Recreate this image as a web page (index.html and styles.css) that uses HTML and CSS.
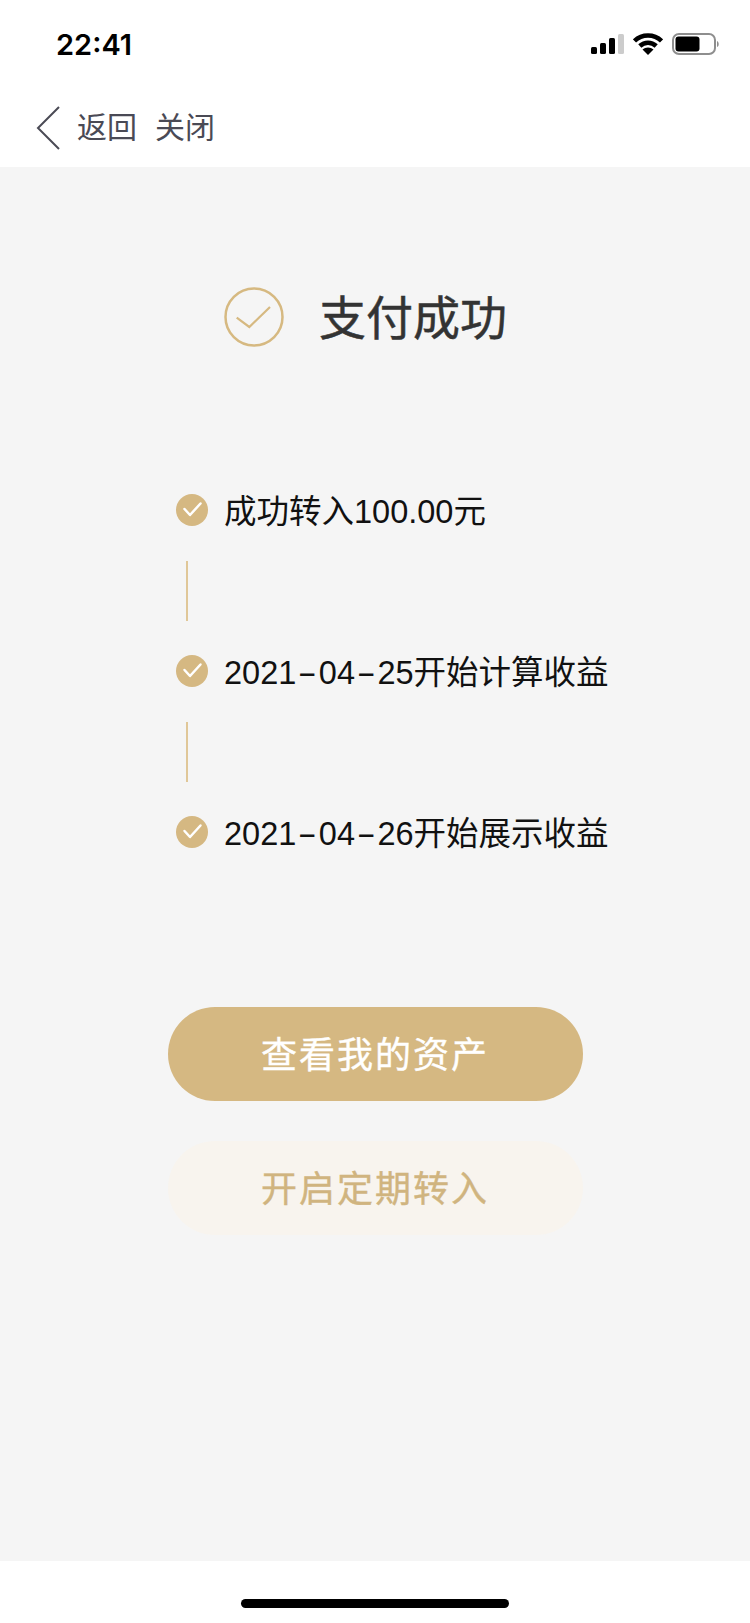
FILE: index.html
```html
<!DOCTYPE html>
<html lang="zh-CN">
<head>
<meta charset="utf-8">
<title>支付成功</title>
<link rel="stylesheet" href="styles.css">
</head>
<body>
<div class="page">
  <header class="status">
    <span class="time">22:41</span>
    <div class="status-icons">
      <svg class="signal" width="34" height="22" viewBox="0 0 34 22"><rect x="1" y="14" width="6" height="7" rx="1.5" fill="#000"/><rect x="10" y="10" width="6" height="11" rx="1.5" fill="#000"/><rect x="19" y="5" width="6" height="16" rx="1.5" fill="#000"/><rect x="28" y="1" width="6" height="20" rx="1.5" fill="#ccc"/></svg>
      <svg class="wifi" width="30" height="22" viewBox="0 0 30 22"><path d="M1.500 8C9 .8 21 .8 28.500 8" fill="none" stroke="#000" stroke-width="4.500"/><path d="M6.800 13C11.500 8.500 18.500 8.500 23.200 13" fill="none" stroke="#000" stroke-width="4.500"/><path d="M15 22l-5.500-5.500c3-2.800 8-2.800 11 0z" fill="#000"/></svg>
      <svg class="battery" width="48" height="24" viewBox="0 0 48 24"><rect x="1" y="2" width="42" height="20" rx="6" fill="none" stroke="#8e8e8e" stroke-width="2"/><rect x="3.500" y="4.500" width="24" height="15" rx="3" fill="#000"/><path d="M45 9c2 .5 2.500 5.500 0 6z" fill="#8e8e8e"/></svg>
    </div>
  </header>
  <nav class="nav">
    <svg class="back" width="26" height="46" viewBox="0 0 26 46"><path d="M23 2 2 23l21 21" fill="none" stroke="#4a4a55" stroke-width="2"/></svg>
    <span class="nav-link">返回</span>
    <span class="nav-link">关闭</span>
  </nav>
  <main class="main">
    <div class="result">
      <svg class="result-icon" width="60" height="60" viewBox="0 0 60 60"><circle cx="30" cy="30" r="28.500" fill="none" stroke="#d6b981" stroke-width="2.500"/><path d="M12.700 30.700 25.300 40 46 20" fill="none" stroke="#d6b981" stroke-width="2.200"/></svg>
      <h1 class="result-title">支付成功</h1>
    </div>
    <ol class="steps">
      <li class="step">
        <svg class="step-icon" width="32" height="32" viewBox="0 0 32 32"><circle cx="16" cy="16" r="16" fill="#d5b882"/><path d="M8.500 15l5.500 6L24.500 9.500" fill="none" stroke="#fff" stroke-width="2.500" stroke-linecap="round" stroke-linejoin="round"/></svg>
        <span class="step-text">成功转入100.00元</span>
      </li>
      <li class="step-line"></li>
      <li class="step">
        <svg class="step-icon" width="32" height="32" viewBox="0 0 32 32"><circle cx="16" cy="16" r="16" fill="#d5b882"/><path d="M8.500 15l5.500 6L24.500 9.500" fill="none" stroke="#fff" stroke-width="2.500" stroke-linecap="round" stroke-linejoin="round"/></svg>
        <span class="step-text">2021<span class="dash">-</span>04<span class="dash">-</span>25开始计算收益</span>
      </li>
      <li class="step-line"></li>
      <li class="step">
        <svg class="step-icon" width="32" height="32" viewBox="0 0 32 32"><circle cx="16" cy="16" r="16" fill="#d5b882"/><path d="M8.500 15l5.500 6L24.500 9.500" fill="none" stroke="#fff" stroke-width="2.500" stroke-linecap="round" stroke-linejoin="round"/></svg>
        <span class="step-text">2021<span class="dash">-</span>04<span class="dash">-</span>26开始展示收益</span>
      </li>
    </ol>
    <div class="actions">
      <button class="btn btn-primary">查看我的资产</button>
      <button class="btn btn-soft">开启定期转入</button>
    </div>
  </main>
  <footer class="home">
    <div class="home-bar"></div>
  </footer>
</div>
</body>
</html>
```

FILE: styles.css
```css
* { box-sizing: border-box; }
html, body { margin: 0; padding: 0; background: #fff; }
body { font-family: "Liberation Sans", "Noto Sans CJK SC", sans-serif; }
.page { width: 750px; height: 1623px; display: flex; flex-direction: column; }
.status { height: 88px; flex: none; display: flex; align-items: center; justify-content: space-between; padding: 0 30px 0 56px; }
.time { font-family: Inter, sans-serif; font-size: 29px; font-weight: 600; color: #000; }
.status-icons { display: flex; align-items: center; gap: 9px; }
.nav { height: 79px; flex: none; display: flex; align-items: center; padding: 0 0 0 36px; }
.back { margin-right: 15px; }
.nav-link { font-size: 30px; color: #4a4a55; margin-right: 18px; padding-bottom: 5px; }
.main { flex: 1; background: #f5f5f5; display: flex; flex-direction: column; align-items: center; padding-top: 120px; }
.result { display: flex; align-items: center; gap: 35px; height: 60px; width: 750px; padding-left: 224px; }
.result-title { margin: 0; padding-top: 3px; font-size: 47px; line-height: 60px; font-weight: 400; color: #333; -webkit-text-stroke: 0.5px #333; }
.steps { list-style: none; margin: 143px 0 0; padding: 0 0 0 176px; width: 750px; }
.step { display: flex; align-items: center; gap: 16px; height: 40px; font-size: 32.500px; color: #111; }
.step-icon { flex: none; }
.step-text { padding-bottom: 3px; }
.dash { display: inline-block; width: 22.500px; text-align: center; transform: scaleX(1.800); }
.step-line { width: 2px; height: 60px; margin: 31px 0 30px 10px; background: #e0c798; }
.actions { margin-top: 155px; display: flex; flex-direction: column; gap: 40px; }
.btn { width: 415px; height: 94px; border: none; border-radius: 47px; font-family: inherit; font-size: 36px; font-weight: 400; -webkit-text-stroke: 0.4px currentColor; letter-spacing: 2px; padding: 0 0 4px; }
.btn-primary { background: #d5b882; color: #fff; }
.btn-soft { background: #f8f4ee; color: #d0b47f; }
.home { height: 62px; flex: none; display: flex; justify-content: center; padding-top: 38px; }
.home-bar { width: 268px; height: 9px; border-radius: 5px; background: #000; }
```
